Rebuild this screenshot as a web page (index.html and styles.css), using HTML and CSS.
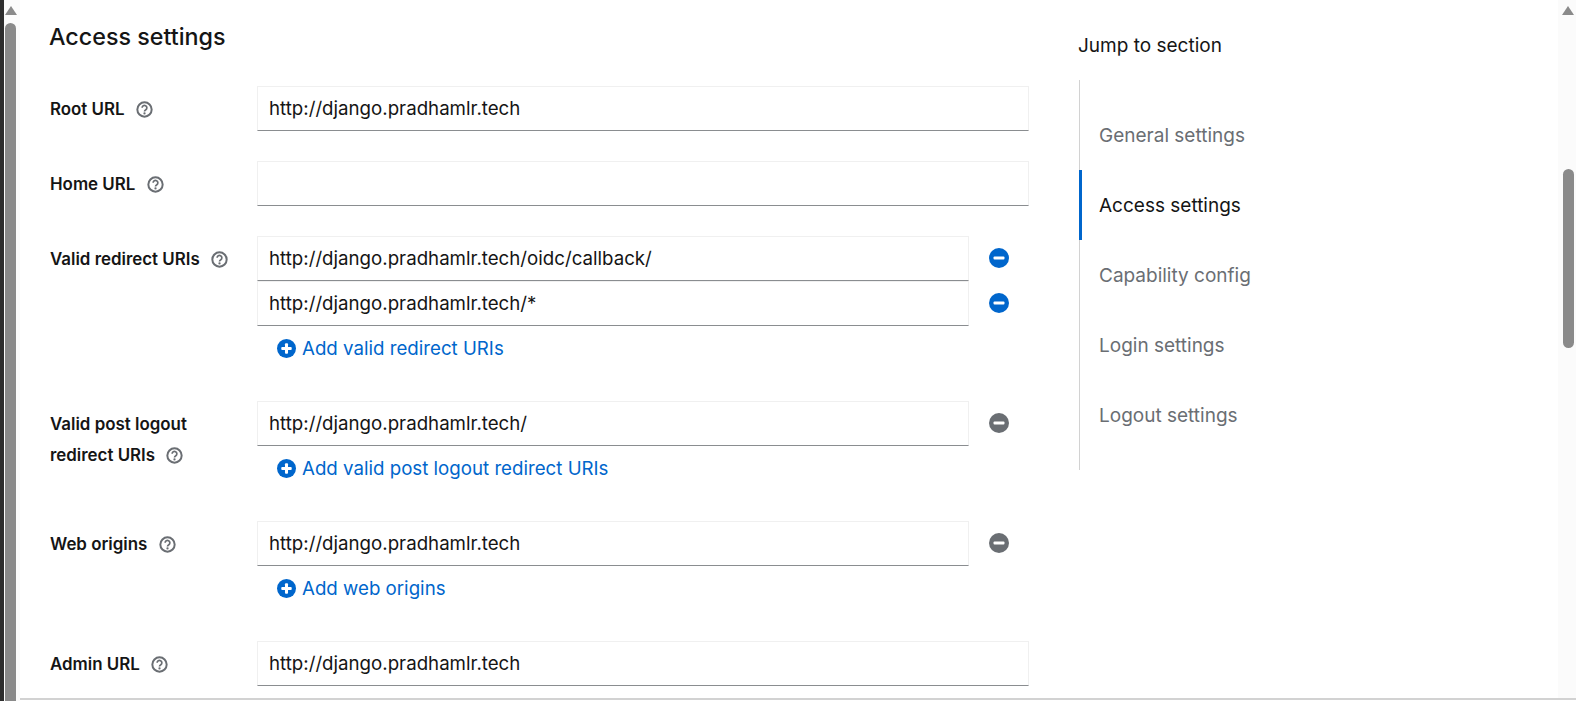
FILE: index.html
```html
<!DOCTYPE html>
<html lang="en">
<head>
    <meta charset="UTF-8">
    <meta name="viewport" content="width=device-width, initial-scale=1.0">
    <title>Access settings</title>
    <link rel="stylesheet" href="styles.css">
</head>
<body>
    <svg class="icon-defs" width="0" height="0" aria-hidden="true">
        <symbol id="icon-help" viewBox="0 0 18 18">
            <circle cx="9" cy="9" r="7.6" fill="none" stroke="currentColor" stroke-width="2.1"/>
            <path d="M6.5 7.2a2.5 2.5 0 1 1 3.9 2c-.9.6-1.4 1-1.4 1.9" fill="none" stroke="currentColor" stroke-width="1.8"/>
            <circle cx="9" cy="13.2" r="1.2" fill="currentColor"/>
        </symbol>
        <symbol id="icon-minus" viewBox="0 0 20 20">
            <circle cx="10" cy="10" r="10" fill="currentColor"/>
            <rect x="4.5" y="8.4" width="11" height="3.2" rx="1" fill="#fff"/>
        </symbol>
        <symbol id="icon-plus" viewBox="0 0 20 20">
            <circle cx="10" cy="10" r="10" fill="currentColor"/>
            <rect x="4.5" y="8.4" width="11" height="3.2" rx="1" fill="#fff"/>
            <rect x="8.4" y="4.5" width="3.2" height="11" rx="1" fill="#fff"/>
        </symbol>
    </svg>

    <div class="scrollbar scrollbar-left">
        <div class="scroll-arrow"></div>
        <div class="scroll-thumb thumb-left"></div>
    </div>

    <div class="shell">
        <div class="shell-top">
            <main class="content">
                <h1 class="section-title">Access settings</h1>
                <form class="form-grid">
                    <div class="field-label">
                        <label>Root URL</label>
                        <svg class="help-icon"><use href="#icon-help"/></svg>
                    </div>
                    <div class="field-control">
                        <input class="text-input" type="text" value="http://django.pradhamlr.tech" aria-label="Root URL">
                    </div>

                    <div class="field-label">
                        <label>Home URL</label>
                        <svg class="help-icon"><use href="#icon-help"/></svg>
                    </div>
                    <div class="field-control">
                        <input class="text-input" type="text" value="" aria-label="Home URL">
                    </div>

                    <div class="field-label">
                        <label>Valid redirect URIs</label>
                        <svg class="help-icon"><use href="#icon-help"/></svg>
                    </div>
                    <div class="field-control">
                        <div class="multi-row">
                            <input class="text-input" type="text" value="http://django.pradhamlr.tech/oidc/callback/" aria-label="Valid redirect URI 1">
                            <button type="button" class="remove-btn"><svg class="remove-icon"><use href="#icon-minus"/></svg></button>
                        </div>
                        <div class="multi-row">
                            <input class="text-input" type="text" value="http://django.pradhamlr.tech/*" aria-label="Valid redirect URI 2">
                            <button type="button" class="remove-btn"><svg class="remove-icon"><use href="#icon-minus"/></svg></button>
                        </div>
                        <a href="#" class="add-link"><svg class="add-icon"><use href="#icon-plus"/></svg>Add valid redirect URIs</a>
                    </div>

                    <div class="field-label">
                        <label>Valid post logout<br>redirect URIs</label>
                        <svg class="help-icon"><use href="#icon-help"/></svg>
                    </div>
                    <div class="field-control">
                        <div class="multi-row">
                            <input class="text-input" type="text" value="http://django.pradhamlr.tech/" aria-label="Valid post logout redirect URI">
                            <button type="button" class="remove-btn is-disabled"><svg class="remove-icon"><use href="#icon-minus"/></svg></button>
                        </div>
                        <a href="#" class="add-link"><svg class="add-icon"><use href="#icon-plus"/></svg>Add valid post logout redirect URIs</a>
                    </div>

                    <div class="field-label">
                        <label>Web origins</label>
                        <svg class="help-icon"><use href="#icon-help"/></svg>
                    </div>
                    <div class="field-control">
                        <div class="multi-row">
                            <input class="text-input" type="text" value="http://django.pradhamlr.tech" aria-label="Web origin">
                            <button type="button" class="remove-btn is-disabled"><svg class="remove-icon"><use href="#icon-minus"/></svg></button>
                        </div>
                        <a href="#" class="add-link"><svg class="add-icon"><use href="#icon-plus"/></svg>Add web origins</a>
                    </div>

                    <div class="field-label">
                        <label>Admin URL</label>
                        <svg class="help-icon"><use href="#icon-help"/></svg>
                    </div>
                    <div class="field-control">
                        <input class="text-input" type="text" value="http://django.pradhamlr.tech" aria-label="Admin URL">
                    </div>
                </form>
            </main>

            <aside class="jump-nav">
                <div class="jump-title">Jump to section</div>
                <ul class="jump-list">
                    <li class="jump-item">General settings</li>
                    <li class="jump-item is-current">Access settings</li>
                    <li class="jump-item">Capability config</li>
                    <li class="jump-item">Login settings</li>
                    <li class="jump-item">Logout settings</li>
                </ul>
            </aside>

            <div class="scrollbar scrollbar-right">
                <div class="scroll-arrow"></div>
                <div class="scroll-thumb thumb-right"></div>
            </div>
        </div>
        <div class="shell-bottom"></div>
    </div>
</body>
</html>
```

FILE: styles.css
```css
* {
    box-sizing: border-box;
}

html,
body {
    height: 100%;
}

body {
    margin: 0;
    display: flex;
    overflow: hidden;
    background-color: #fff;
    color: #151515;
    font-family: Inter, "Noto Sans", sans-serif;
    font-size: 18.7px;
    border-left: 4px solid #2e2e2e;
}

.icon-defs {
    position: absolute;
}

/* fake browser scrollbars */
.scrollbar {
    flex: none;
    background-color: #fbfbfb;
    display: flex;
    flex-direction: column;
    align-items: center;
    padding-top: 6px;
}

.scrollbar-left {
    width: 16px;
    padding-right: 3px;
}

.scrollbar-right {
    width: 18px;
    padding-left: 2px;
}

.scroll-arrow {
    width: 0;
    height: 0;
    border-left: 6.5px solid transparent;
    border-right: 6.5px solid transparent;
    border-bottom: 9px solid #8a8a8a;
}

.scroll-thumb {
    width: 11px;
    border-radius: 6px;
    background-color: #8a8a8a;
}

.thumb-left {
    flex: 1;
    margin-top: 8px;
    border-radius: 6px 6px 0 0;
}

.thumb-right {
    height: 179px;
    margin-top: 154px;
}

.shell {
    flex: 1;
    min-width: 0;
    display: flex;
    flex-direction: column;
}

.shell-top {
    flex: 1;
    min-height: 0;
    display: flex;
}

.shell-bottom {
    flex: none;
    height: 3px;
    border-top: 2px solid #d2d2d2;
}

.content {
    flex: none;
    width: 1059px;
    padding-left: 30px;
}

.section-title {
    margin: 0 0 0 -1px;
    height: 86px;
    padding-top: 22px;
    font-size: 23.3px;
    line-height: 30px;
    font-weight: 500;
}

.form-grid {
    display: grid;
    grid-template-columns: 207px 772px;
    row-gap: 30px;
}

.field-label {
    padding-top: 7px;
    line-height: 30px;
    font-size: 16.9px;
    font-weight: 600;
    align-self: start;
}

.field-label label {
    vertical-align: middle;
}

.help-icon {
    width: 17px;
    height: 17px;
    margin: -2px 0 -2px 7px;
    vertical-align: middle;
    color: #6a6e73;
}

.field-control {
    display: flex;
    flex-direction: column;
}

.multi-row {
    display: flex;
    align-items: center;
}

.text-input {
    display: block;
    width: 100%;
    height: 45px;
    padding: 0 11px;
    border: 1px solid #f0f0f0;
    border-bottom-color: #8a8d90;
    outline: none;
    background-color: #fff;
    color: #151515;
    font-family: inherit;
    font-size: 18.7px;
}

.multi-row .text-input {
    flex: 1;
    min-width: 0;
}

.remove-btn {
    flex: none;
    width: 60px;
    height: 45px;
    padding: 0 0 2px;
    border: none;
    background: none;
    color: #06c;
    display: flex;
    align-items: center;
    justify-content: center;
}

.remove-btn.is-disabled {
    color: #6a6e73;
}

.remove-icon {
    width: 20px;
    height: 20px;
}

.add-link {
    height: 45px;
    padding-left: 20px;
    display: flex;
    align-items: center;
    color: #06c;
    text-decoration: none;
}

.add-icon {
    flex: none;
    width: 19px;
    height: 19px;
    margin-right: 6px;
}

.jump-nav {
    flex: none;
    width: 479px;
    padding-top: 31px;
    font-size: 19px;
}

.jump-title {
    height: 49px;
    margin-left: -1px;
    line-height: 30px;
}

.jump-list {
    margin: 0;
    padding: 20px 0;
    list-style: none;
    border-left: 1px solid #d2d2d2;
}

.jump-item {
    height: 70px;
    padding-left: 19px;
    line-height: 72px;
    color: #6a6e73;
}

.jump-item.is-current {
    margin-left: -1px;
    padding-left: 17px;
    border-left: 3px solid #06c;
    color: #151515;
}
```
